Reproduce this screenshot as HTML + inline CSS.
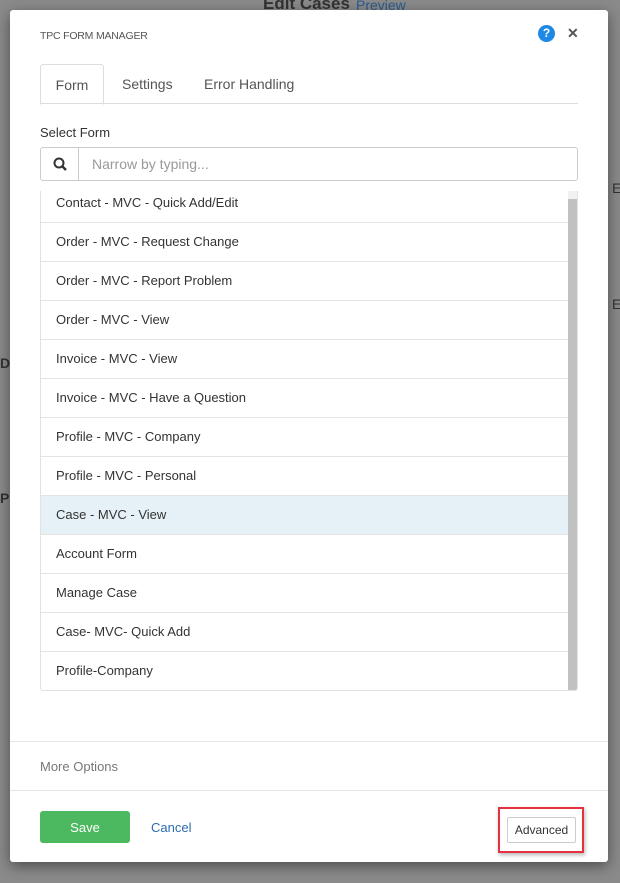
<!DOCTYPE html>
<html><head><meta charset="utf-8"><style>
*{box-sizing:border-box;margin:0;padding:0}
body{width:620px;height:883px;overflow:hidden;background:#8a8a8a;font-family:"Liberation Sans",sans-serif;position:relative}
.bgt{position:absolute;color:#333;font-size:14px}
.modal{position:absolute;left:10px;top:10px;width:598px;height:852px;background:#fff;border-radius:3px;box-shadow:0 4px 14px rgba(0,0,0,.45)}
.title{position:absolute;left:30px;top:20px;font-size:10.5px;color:#555;letter-spacing:-.2px}
.help{position:absolute;left:528px;top:15px;width:17px;height:17px;border-radius:50%;background:#1e88e5;color:#fff;font-weight:bold;font-size:12px;text-align:center;line-height:17px}
.close{position:absolute;left:557px;top:15px;font-size:14px;font-weight:bold;color:#555}
.tabs{position:absolute;left:30px;top:54px;width:538px;height:40px;border-bottom:1px solid #ddd}
.tab{position:absolute;top:0;height:41px;line-height:40px;font-size:14px;color:#555}
.tab.act{left:0;width:64px;border:1px solid #ddd;border-bottom:1px solid #fff;border-radius:3px 3px 0 0;text-align:center}
.lbl{position:absolute;left:30px;top:115px;font-size:13px;color:#333}
.search{position:absolute;left:30px;top:137px;width:538px;height:34px;border:1px solid #ccc;border-radius:3px}
.search .ic{position:absolute;left:0;top:0;width:38px;height:32px;border-right:1px solid #ccc}
.search .ph{position:absolute;left:51px;top:8px;font-size:14px;color:#999}
.list{position:absolute;left:30px;top:181px;width:538px;height:500px;border:1px solid #e2e2e2;border-top:none;border-radius:0 0 3px 3px;overflow:hidden}
.inner{margin-top:-7px}
.row{height:39px;line-height:38px;border-bottom:1px solid #e4e4e4;padding-left:15px;font-size:13px;color:#333;width:529px}
.row.hl{background:#e6f0f7}
.track{position:absolute;right:0;top:0;width:9px;height:500px;background:#f1f1f1}
.thumb{position:absolute;right:0;top:8px;width:9px;height:492px;background:#c1c1c1}
.hr{position:absolute;left:0;width:598px;border-top:1px solid #e5e5e5}
.more{position:absolute;left:30px;top:749px;font-size:13px;color:#777}
.save{position:absolute;left:30px;top:801px;width:90px;height:32px;background:#4cb860;border-radius:3px;color:#fff;font-size:13px;text-align:center;line-height:33px}
.cancel{position:absolute;left:141px;top:810px;font-size:13px;color:#2a6cb0}
.redbox{position:absolute;left:488px;top:797px;width:86px;height:46px;border:2px solid #e53040;box-shadow:1px 2px 4px rgba(0,0,0,.3)}
.adv{position:absolute;left:497px;top:807px;width:69px;height:26px;border:1px solid #ccc;border-radius:2px;font-size:12px;color:#333;text-align:center;line-height:24px}
</style></head><body>
<div class="bgt" style="left:263px;top:-6px;font-size:17px;font-weight:bold">Edit Cases</div>
<div class="bgt" style="left:356px;top:-3px;color:#2a5a90">Preview</div>
<div class="bgt" style="left:0;top:355px;font-weight:bold">D</div>
<div class="bgt" style="left:0;top:490px;font-weight:bold">Pr</div>
<div class="bgt" style="left:612px;top:180px">E</div>
<div class="bgt" style="left:612px;top:296px">E</div>
<div class="modal">
<div class="title">TPC FORM MANAGER</div>
<div class="help">?</div>
<div class="close">✕</div>
<div class="tabs">
<div class="tab act">Form</div>
<div class="tab" style="left:82px">Settings</div>
<div class="tab" style="left:164px">Error Handling</div>
</div>
<div class="lbl">Select Form</div>
<div class="search"><div class="ic"><svg width="38" height="32"><circle cx="18" cy="15" r="4.5" fill="none" stroke="#333" stroke-width="2"/><line x1="21.5" y1="18.5" x2="25" y2="22" stroke="#333" stroke-width="2.4"/></svg></div><div class="ph">Narrow by typing...</div></div>
<div class="list"><div class="inner">
<div class="row">Contact - MVC - Quick Add/Edit</div>
<div class="row">Order - MVC - Request Change</div>
<div class="row">Order - MVC - Report Problem</div>
<div class="row">Order - MVC - View</div>
<div class="row">Invoice - MVC - View</div>
<div class="row">Invoice - MVC - Have a Question</div>
<div class="row">Profile - MVC - Company</div>
<div class="row">Profile - MVC - Personal</div>
<div class="row hl">Case - MVC - View</div>
<div class="row">Account Form</div>
<div class="row">Manage Case</div>
<div class="row">Case- MVC- Quick Add</div>
<div class="row" style="border-bottom:none">Profile-Company</div>
</div>
<div class="track"><div class="thumb"></div></div>
</div>
<div class="hr" style="top:731px"></div>
<div class="more">More Options</div>
<div class="hr" style="top:780px"></div>
<div class="save">Save</div>
<div class="cancel">Cancel</div>
<div class="redbox"></div>
<div class="adv">Advanced</div>
</div>
</body></html>
